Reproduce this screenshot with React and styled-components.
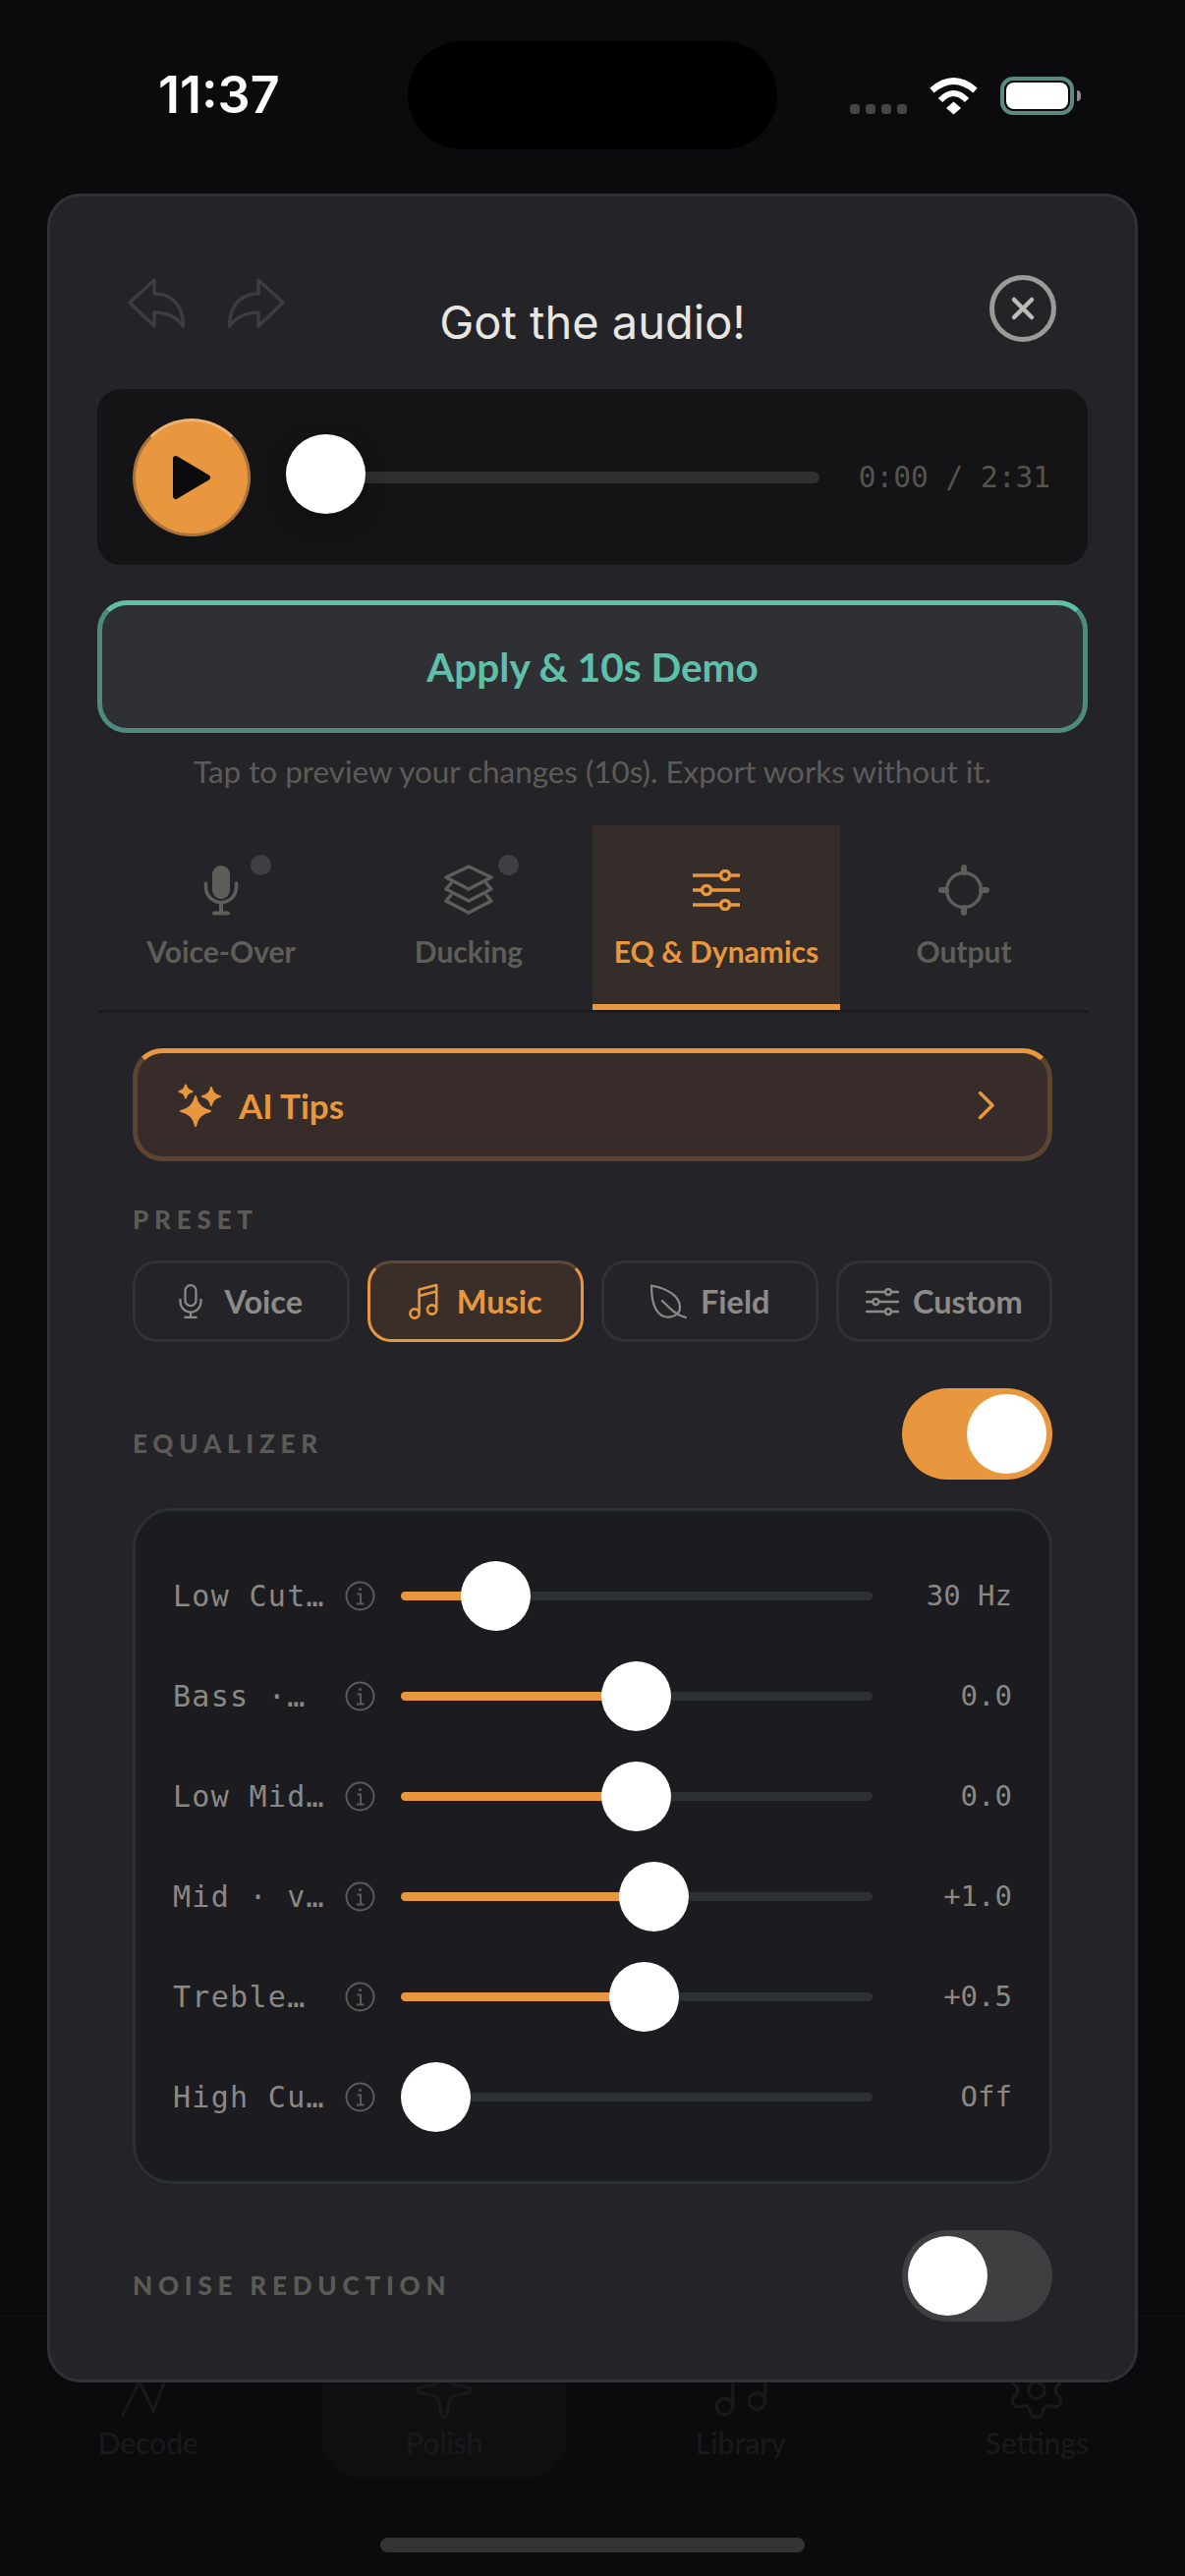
import React from "react";
import styled, { createGlobalStyle } from "styled-components";
import { Music, Sparkle, Settings } from "lucide-react";

const ORANGE = "#e8973e";
const TEAL = "#5fc0a9";
const UI_FONT = '"Lato", "Noto Sans", sans-serif';
const MONO_FONT = '"DejaVu Sans Mono", "Liberation Mono", monospace';

const GlobalStyle = createGlobalStyle`
  html, body {
    margin: 0;
    padding: 0;
    background: #0b0b0d;
  }
  * {
    box-sizing: border-box;
  }
`;

const Page = styled.div`
  position: relative;
  width: 1206px;
  height: 2622px;
  display: flex;
  flex-direction: column;
  overflow: hidden;
  background: #0b0b0d;
  font-family: ${UI_FONT};
`;

/* status bar */
const StatusBar = styled.div`
  display: grid;
  grid-template-columns: 415px 376px 1fr;
  align-items: start;
`;
const Clock = styled.div`
  padding: 67px 0 0 161px;
  font-family: "Inter", sans-serif;
  font-size: 52px;
  line-height: 60px;
  font-weight: 600;
  color: #fff;
`;
const Island = styled.div`
  height: 110px;
  margin-top: 42px;
  border-radius: 55px;
  background: #000;
`;
const StatusIcons = styled.div`
  height: 117px;
  padding-left: 74px;
  display: flex;
  align-items: flex-end;
`;
const SignalDots = styled.div`
  display: flex;
  gap: 6px;
  margin-bottom: 1px;
`;
const SignalDot = styled.span`
  width: 10px;
  height: 10px;
  border-radius: 3.5px;
  background: #444446;
`;
const WifiIcon = styled.svg`
  width: 51px;
  height: 38px;
  margin-left: 22px;
`;
const Battery = styled.div`
  position: relative;
  width: 75px;
  height: 39px;
  margin-left: 22px;
  padding: 2px;
  border: 4px solid #5a8a80;
  border-radius: 13px;
  &::after {
    content: "";
    position: absolute;
    right: -11px;
    top: 10px;
    width: 4px;
    height: 11px;
    border-radius: 0 4px 4px 0;
    background: #8a8a8a;
  }
`;
const BatteryFill = styled.div`
  width: 100%;
  height: 100%;
  border-radius: 8px;
  background: #fff;
`;

/* the bottom nav sits behind the sheet */
const BottomNav = styled.nav`
  margin-top: auto;
  height: 265px;
  border-top: 1px solid #131315;
  display: grid;
  grid-template-columns: repeat(4, 1fr);
  justify-items: center;
`;
const NavItem = styled.div`
  width: 250px;
  height: 164px;
  padding-top: 42px;
  display: flex;
  flex-direction: column;
  align-items: center;
  color: #19191b;
  border-radius: 0 0 40px 40px;
  background: ${(p) => (p.$active ? "#0f0f11" : "transparent")};
`;
const NavLabel = styled.span`
  font-size: 30px;
  line-height: 40px;
  font-weight: 500;
`;
const HomeBar = styled.div`
  position: absolute;
  left: 387px;
  top: 2583px;
  width: 432px;
  height: 15px;
  border-radius: 8px;
  background: #333335;
`;

/* sheet */
const Sheet = styled.section`
  position: absolute;
  left: 48px;
  top: 197px;
  width: 1110px;
  height: 2228px;
  padding: 0 48px;
  background: #242428;
  border: 3px solid #2e3236;
  border-radius: 34px;
  overflow: hidden;
`;
const Header = styled.header`
  height: 196px;
  display: grid;
  grid-template-columns: 1fr auto 1fr;
  align-items: start;
`;
const HistoryButtons = styled.div`
  display: flex;
  gap: 44px;
  padding: 82px 0 0 31px;
`;
const Title = styled.h1`
  margin: 105px 0 0;
  font-family: "Inter", sans-serif;
  font-size: 47px;
  line-height: 46px;
  font-weight: 400;
  color: #e8e6e1;
`;
const CloseButton = styled.button`
  justify-self: end;
  width: 68px;
  height: 68px;
  margin: 80px 32px 0 0;
  padding: 0;
  display: flex;
  align-items: center;
  justify-content: center;
  background: none;
  border: 5px solid #9c9a98;
  border-radius: 50%;
`;

const Player = styled.div`
  height: 179px;
  padding: 0 38px 0 36px;
  display: flex;
  align-items: center;
  border-radius: 24px;
  background: #141416;
`;
const PlayButton = styled.button`
  flex: none;
  width: 120px;
  height: 120px;
  padding: 0;
  display: flex;
  align-items: center;
  justify-content: center;
  border: 3px solid #a9743c;
  border-top-color: #eeb273;
  border-radius: 50%;
  background: ${ORANGE};
`;
const PlayerTrack = styled.div`
  position: relative;
  flex: 1;
  height: 12px;
  margin: 0 40px 0 36px;
  border-radius: 6px;
  background: #2f2f31;
`;
const PlayerThumb = styled.div`
  position: absolute;
  left: 0;
  top: -38px;
  width: 81px;
  height: 81px;
  border-radius: 50%;
  background: #fff;
  box-shadow: 0 8px 24px rgba(0, 0, 0, 0.3);
`;
const TimeText = styled.span`
  font-family: ${MONO_FONT};
  font-size: 29.5px;
  color: #55534f;
  white-space: nowrap;
`;

const ApplyButton = styled.button`
  width: 100%;
  height: 135px;
  margin-top: 36px;
  display: block;
  font-family: ${UI_FONT};
  font-size: 40.5px;
  font-weight: 700;
  color: ${TEAL};
  background: #2f3034;
  border: 5px solid #4f8a7f;
  border-top-color: ${TEAL};
  border-radius: 30px;
`;
const Hint = styled.p`
  margin: 17px 0 33px;
  font-size: 31.4px;
  line-height: 44px;
  text-align: center;
  color: #5d5b58;
`;

const Tabs = styled.div`
  height: 191px;
  display: grid;
  grid-template-columns: repeat(4, 1fr);
  border-bottom: 3px solid #1b1b1e;
`;
const Tab = styled.div`
  position: relative;
  padding-top: 40px;
  display: flex;
  flex-direction: column;
  align-items: center;
  color: ${(p) => (p.$active ? ORANGE : "#5f5d59")};
  background: ${(p) => (p.$active ? "#352d2a" : "transparent")};
  border-bottom: 6px solid ${(p) => (p.$active ? ORANGE : "transparent")};
`;
const TabIcon = styled.div`
  height: 52px;
  display: flex;
  align-items: center;
  justify-content: center;
`;
const TabLabel = styled.span`
  margin-top: 16px;
  font-size: 30px;
  line-height: 40px;
  font-weight: 700;
`;
const TabDot = styled.span`
  position: absolute;
  left: 156px;
  top: 30px;
  width: 21px;
  height: 21px;
  border-radius: 50%;
  background: #3e3e45;
`;

const Content = styled.div`
  padding: 36px 36px 0;
`;
const TipsButton = styled.button`
  width: 100%;
  height: 115px;
  padding: 0 53px 0 41px;
  display: flex;
  align-items: center;
  font-family: ${UI_FONT};
  color: ${ORANGE};
  background: #372c2a;
  border: 5px solid #5c4430;
  border-top-color: ${ORANGE};
  border-radius: 30px;
`;
const TipsLabel = styled.span`
  margin-left: 18px;
  flex: 1;
  text-align: left;
  font-size: 35px;
  font-weight: 700;
`;
const SectionLabel = styled.div`
  font-size: 26px;
  line-height: 30px;
  font-weight: 900;
  letter-spacing: 5.8px;
  color: #5c5a56;
`;
const PresetLabel = styled(SectionLabel)`
  margin-top: 44px;
`;
const PresetRow = styled.div`
  margin-top: 27px;
  display: grid;
  grid-template-columns: repeat(4, 1fr);
  gap: 18px;
`;
const PresetButton = styled.button`
  height: 83px;
  padding: 0;
  display: flex;
  align-items: center;
  justify-content: center;
  gap: ${(p) => p.$gap || 22}px;
  font-family: ${UI_FONT};
  font-size: 32.5px;
  font-weight: 700;
  color: ${(p) => (p.$active ? ORANGE : "#8d8b88")};
  background: ${(p) => (p.$active ? "#3a2f28" : "transparent")};
  border: 3px solid ${(p) => (p.$active ? ORANGE : "#2f3336")};
  border-top-color: ${(p) => (p.$active ? "#5c4a34" : "#2f3336")};
  border-radius: 24px;
`;
const SwitchRow = styled.div`
  margin-top: 47px;
  display: flex;
  justify-content: space-between;
`;
const SwitchLabel = styled(SectionLabel)`
  padding-top: 41px;
`;
const Switch = styled.div`
  width: 153px;
  height: 93px;
  padding: 6px;
  display: flex;
  justify-content: ${(p) => (p.$on ? "flex-end" : "flex-start")};
  border-radius: 47px;
  background: ${(p) => (p.$on ? ORANGE : "#3f3f41")};
`;
const SwitchKnob = styled.div`
  width: 81px;
  height: 81px;
  border-radius: 50%;
  background: #fff;
`;

const EqPanel = styled.div`
  margin-top: 29px;
  padding: 35px 38px;
  background: #1c1c20;
  border: 3px solid #2b3034;
  border-radius: 40px;
`;
const EqRow = styled.div`
  height: 102px;
  display: flex;
  align-items: center;
`;
const EqLabel = styled.span`
  width: 160px;
  white-space: nowrap;
  font-family: ${MONO_FONT};
  font-size: 30px;
  letter-spacing: 1.3px;
  color: #8a8885;
`;
const InfoIcon = styled.svg`
  flex: none;
  width: 31px;
  height: 31px;
  margin-left: 15px;
`;
const EqTrack = styled.div`
  position: relative;
  flex: none;
  width: 480px;
  height: 9px;
  margin-left: 26px;
  border-radius: 5px;
  background: #2d3033;
`;
const EqFill = styled.div`
  height: 100%;
  border-radius: 5px 0 0 5px;
  background: ${ORANGE};
`;
const EqThumb = styled.div`
  position: absolute;
  top: -31px;
  width: 71px;
  height: 71px;
  border-radius: 50%;
  background: #fff;
`;
const EqValue = styled.span`
  flex: 1;
  text-align: right;
  font-family: ${MONO_FONT};
  font-size: 29px;
  color: #8a8885;
`;

/* icons */
const ReplyIcon = ({ flip }) => (
  <svg width="58" height="52" viewBox="0 0 58 52" fill="none">
    <path
      transform={flip ? "translate(58 0) scale(-1 1)" : undefined}
      d="M27 3 L2 26 L27 50 V36 C40 36 50 41 56.5 50 C56.5 30 46 17 27 17 Z"
      stroke="#3b3d40"
      strokeWidth="3.5"
      strokeLinejoin="round"
    />
  </svg>
);

const MicFilled = () => (
  <svg width="48" height="52" viewBox="0 0 48 52" fill="none" stroke="currentColor">
    <rect x="15" y="1" width="18" height="34" rx="9" fill="currentColor" stroke="none" />
    <path d="M8.5 19 V23 a15.5 15.5 0 0 0 31 0 V19" strokeWidth="3.5" strokeLinecap="round" />
    <path d="M24 39 V49" strokeWidth="4" />
    <path d="M17 49.5 H31" strokeWidth="4" strokeLinecap="round" />
  </svg>
);

const LayersIcon = () => (
  <svg width="50" height="52" viewBox="0 0 50 52" fill="none" stroke="currentColor" strokeWidth="3.5" strokeLinejoin="round" strokeLinecap="round">
    <path d="M2 13 L25 2 L48 13 L25 25 Z" />
    <path d="M7 19 L2 25 L25 37 L48 25 L43 19" />
    <path d="M7 31 L2 37 L25 49 L48 37 L43 31" />
  </svg>
);

const SlidersIcon = ({ width = 48, height = 42, knob, strokeWidth = 3.5 }) => (
  <svg width={width} height={height} viewBox="0 0 48 42" fill="none" stroke="currentColor" strokeWidth={strokeWidth}>
    <path d="M0 6 H48 M0 21 H48 M0 36 H48" strokeLinecap="round" />
    <circle cx="33" cy="6" r="4.5" fill={knob} />
    <circle cx="14" cy="21" r="4.5" fill={knob} />
    <circle cx="33" cy="36" r="4.5" fill={knob} />
  </svg>
);

const TargetIcon = () => (
  <svg width="52" height="52" viewBox="0 0 52 52" fill="none" stroke="currentColor">
    <circle cx="26" cy="26" r="17.5" strokeWidth="3.5" />
    <path d="M26 3 V8 M26 44 V49 M3 26 H8 M44 26 H49" strokeWidth="6" strokeLinecap="round" />
  </svg>
);

const MicOutline = () => (
  <svg width="24" height="35" viewBox="0 0 24 35" fill="none" stroke="currentColor" strokeWidth="2.2">
    <rect x="6.5" y="1.2" width="11" height="21" rx="5.5" />
    <path d="M1.5 15 V18 a10.5 10.5 0 0 0 21 0 V15" />
    <path d="M12 28.5 V33.5 M5.5 33.8 H18.5" />
  </svg>
);

const NoteIcon = () => (
  <svg width="30" height="37" viewBox="0 0 30 37" fill="none" stroke="currentColor" strokeWidth="2.6" strokeLinejoin="round">
    <circle cx="6" cy="31" r="4.6" />
    <circle cx="23.6" cy="27" r="4.6" />
    <path d="M10.6 31 V6.5 L28.2 2 V27" />
    <path d="M10.6 13 L28.2 8.5" />
  </svg>
);

const LeafIcon = () => (
  <svg width="38" height="36" viewBox="0 0 38 36" fill="none" stroke="currentColor" strokeWidth="2.2" strokeLinejoin="round" strokeLinecap="round">
    <path d="M2 1.5 C20 5 31 13 31 24 C31 31 23 35 15 33 C6 30 2 18 2 1.5 Z" />
    <path d="M13 17 C19 23 26 31 37 34" />
  </svg>
);

const star = (cx, cy, r) => {
  const k = r * 0.16;
  return `M${cx} ${cy - r} Q${cx + k} ${cy - k} ${cx + r} ${cy} Q${cx + k} ${cy + k} ${cx} ${cy + r} Q${cx - k} ${cy + k} ${cx - r} ${cy} Q${cx - k} ${cy - k} ${cx} ${cy - r} Z`;
};

const SparklesIcon = () => (
  <svg width="44" height="44" viewBox="0 0 44 44" fill="currentColor" stroke="currentColor" strokeWidth="2" strokeLinejoin="round">
    <path d={star(18, 28, 15)} />
    <path d={star(8, 8, 6.5)} />
    <path d={star(34, 13, 9)} />
  </svg>
);

const SLIDERS = [
  { label: "Low Cut…", value: "30 Hz", pos: 0.15 },
  { label: "Bass ·…", value: "0.0", pos: 0.5 },
  { label: "Low Mid…", value: "0.0", pos: 0.5 },
  { label: "Mid · v…", value: "+1.0", pos: 0.545 },
  { label: "Treble…", value: "+0.5", pos: 0.52 },
  { label: "High Cu…", value: "Off", pos: 0 },
];

const Slider = ({ label, value, pos }) => {
  const center = pos * 408 + 35.5;
  return (
    <EqRow>
      <EqLabel>{label}</EqLabel>
      <InfoIcon viewBox="0 0 31 31" fill="none" stroke="#5c5a58">
        <circle cx="15.5" cy="15.5" r="14" strokeWidth="2" />
        <path d="M12.5 13.5 H16 V23 M12 23.5 H19.5" strokeWidth="2" />
        <circle cx="15.5" cy="8.5" r="1.6" fill="#5c5a58" stroke="none" />
      </InfoIcon>
      <EqTrack>
        <EqFill style={{ width: center }} />
        <EqThumb style={{ left: center - 35.5 }} />
      </EqTrack>
      <EqValue>{value}</EqValue>
    </EqRow>
  );
};

const NAV_ICON = { size: 66, strokeWidth: 1.2 };

export default function App() {
  return (
    <Page>
      <GlobalStyle />
      <StatusBar>
        <Clock>11:37</Clock>
        <Island />
        <StatusIcons>
          <SignalDots>
            <SignalDot />
            <SignalDot />
            <SignalDot />
            <SignalDot />
          </SignalDots>
          <WifiIcon viewBox="0 0 51 38" fill="none" stroke="#fff">
            <path d="M3.5 13 Q25.5 -6 47.5 13" strokeWidth="6.5" />
            <path d="M12 23 Q25.5 9 39 23" strokeWidth="6" />
            <path d="M18 31 L25.5 24.5 L33 31 L25.5 37.5 Z" fill="#fff" stroke="none" />
          </WifiIcon>
          <Battery>
            <BatteryFill />
          </Battery>
        </StatusIcons>
      </StatusBar>

      <BottomNav>
        <NavItem>
          <svg width="66" height="66" viewBox="0 0 66 66" fill="none" stroke="currentColor" strokeWidth="3">
            <path d="M6 60 C12 48 18 36 24 24 L38 54 C42 44 48 26 56 10" />
          </svg>
          <NavLabel>Decode</NavLabel>
        </NavItem>
        <NavItem $active>
          <Sparkle {...NAV_ICON} />
          <NavLabel>Polish</NavLabel>
        </NavItem>
        <NavItem>
          <Music {...NAV_ICON} />
          <NavLabel>Library</NavLabel>
        </NavItem>
        <NavItem>
          <Settings {...NAV_ICON} />
          <NavLabel>Settings</NavLabel>
        </NavItem>
      </BottomNav>
      <HomeBar />

      <Sheet>
        <Header>
          <HistoryButtons>
            <ReplyIcon />
            <ReplyIcon flip />
          </HistoryButtons>
          <Title>Got the audio!</Title>
          <CloseButton>
            <svg width="28" height="28" viewBox="0 0 28 28" fill="none" stroke="#bdbbb9" strokeWidth="4.5" strokeLinecap="round">
              <path d="M5 5 L23 23 M23 5 L5 23" />
            </svg>
          </CloseButton>
        </Header>

        <Player>
          <PlayButton>
            <svg width="40" height="46" viewBox="0 0 40 46" fill="#0b0b0d" stroke="#0b0b0d" strokeWidth="6" strokeLinejoin="round">
              <path d="M4 4 L36 23 L4 42 Z" />
            </svg>
          </PlayButton>
          <PlayerTrack>
            <PlayerThumb />
          </PlayerTrack>
          <TimeText>0:00 / 2:31</TimeText>
        </Player>

        <ApplyButton>Apply &amp; 10s Demo</ApplyButton>
        <Hint>Tap to preview your changes (10s). Export works without it.</Hint>

        <Tabs>
          <Tab>
            <TabIcon>
              <MicFilled />
            </TabIcon>
            <TabLabel>Voice-Over</TabLabel>
            <TabDot />
          </Tab>
          <Tab>
            <TabIcon>
              <LayersIcon />
            </TabIcon>
            <TabLabel>Ducking</TabLabel>
            <TabDot />
          </Tab>
          <Tab $active>
            <TabIcon>
              <SlidersIcon knob="#352d2a" />
            </TabIcon>
            <TabLabel>EQ &amp; Dynamics</TabLabel>
          </Tab>
          <Tab>
            <TabIcon>
              <TargetIcon />
            </TabIcon>
            <TabLabel>Output</TabLabel>
          </Tab>
        </Tabs>

        <Content>
          <TipsButton>
            <SparklesIcon />
            <TipsLabel>AI Tips</TipsLabel>
            <svg width="18" height="30" viewBox="0 0 18 30" fill="none" stroke="currentColor" strokeWidth="3.5" strokeLinecap="round" strokeLinejoin="round">
              <path d="M2.5 2.5 L15 15 L2.5 27.5" />
            </svg>
          </TipsButton>

          <PresetLabel>PRESET</PresetLabel>
          <PresetRow>
            <PresetButton>
              <MicOutline />
              Voice
            </PresetButton>
            <PresetButton $active $gap={19}>
              <NoteIcon />
              Music
            </PresetButton>
            <PresetButton $gap={14}>
              <LeafIcon />
              Field
            </PresetButton>
            <PresetButton $gap={14}>
              <SlidersIcon width={34} height={28} knob="#242428" strokeWidth={3.6} />
              Custom
            </PresetButton>
          </PresetRow>

          <SwitchRow>
            <SwitchLabel>EQUALIZER</SwitchLabel>
            <Switch $on>
              <SwitchKnob />
            </Switch>
          </SwitchRow>

          <EqPanel>
            {SLIDERS.map((s) => (
              <Slider key={s.label} {...s} />
            ))}
          </EqPanel>

          <SwitchRow>
            <SwitchLabel>NOISE REDUCTION</SwitchLabel>
            <Switch>
              <SwitchKnob />
            </Switch>
          </SwitchRow>
        </Content>
      </Sheet>
    </Page>
  );
}
